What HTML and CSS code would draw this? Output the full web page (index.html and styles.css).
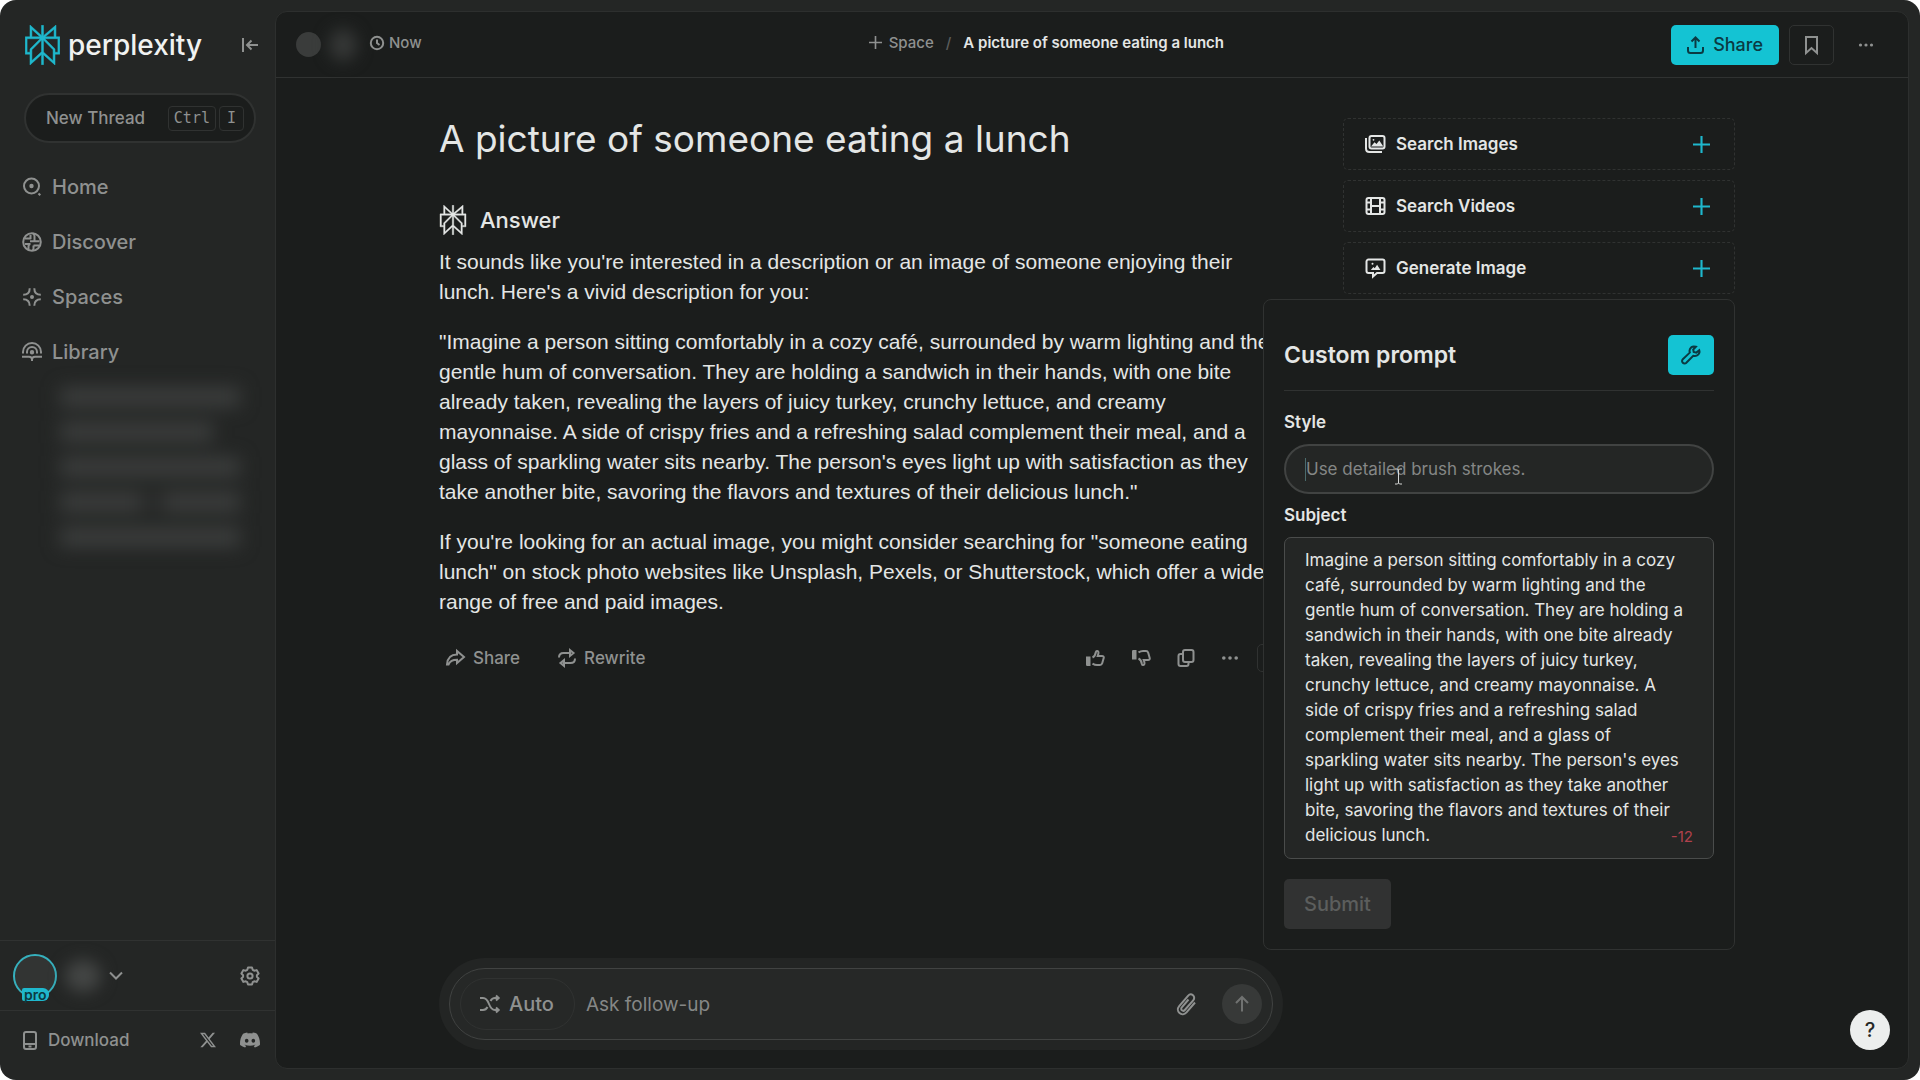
FILE: index.html
```html
<!DOCTYPE html>
<html lang="en">
<head>
  <meta charset="UTF-8" />
  <meta name="viewport" content="width=device-width, initial-scale=1.0"/>
  <title>A picture of someone eating a lunch</title>
  <link rel="stylesheet" href="styles.css">
</head>
<body>
  <!-- shared icons -->
  <svg class="sprite" aria-hidden="true">
    <symbol id="logo" viewBox="1.6 0 20.8 24"><path fill="currentColor" stroke="currentColor" stroke-width=".3" d="M22.3977 7.0896h-2.3106V.0676l-7.5094 6.3542V.1577h-1.1554v6.1966L4.4904 0v7.0896H1.6023v10.3976h2.8882V24l6.932-6.3591v6.2005h1.1554v-6.0469l6.9318 6.1807v-6.4879h2.8882V7.0896zm-3.4657-4.531v4.531h-5.355l5.355-4.531zm-13.2862.0676 4.8691 4.4634H5.6458V2.6262zM2.7576 16.332V8.245h7.8476l-6.1149 6.1147v1.9723H2.7576zm2.8882 5.0404v-3.8852h.0001v-2.6488l5.7763-5.7764v7.0111l-5.7764 5.2993zm12.7086.0248-5.7766-5.1509V9.0618l5.7766 5.7766v6.5588zm2.8882-5.0652h-1.733v-1.9723L13.3948 8.245h7.8478v8.087z"/></symbol>
    <symbol id="plus" viewBox="0 0 16 16"><path d="M8 0v16M0 8h16"/></symbol>
    <symbol id="dots" viewBox="0 0 16 16"><g fill="currentColor" stroke="none"><circle cx="2.5" cy="8" r="1.6"/><circle cx="8" cy="8" r="1.6"/><circle cx="13.5" cy="8" r="1.6"/></g></symbol>
    <symbol id="thumb" viewBox="0 0 20 20"><path fill="currentColor" stroke="none" d="M1 8.500h4.500V18H2.200A1.200 1.200 0 0 1 1 16.800Z"/><path d="M7.500 9.500c2-1 3-3 3.400-5.500.3-1.600 2.600-1.500 2.600.6 0 1.500-.5 2.400-.8 3.300h4.300c1.400 0 2 1 1.700 2.200l-1.500 5.200c-.4 1.300-1 1.700-2.200 1.700h-3c-1.800 0-3-.5-4.500-1.400"/></symbol>
  </svg>

  <div class="app">
    <aside class="sidebar">
      <div class="brand">
        <a href="#" class="brand-link">
          <svg class="brand-mark"><use href="#logo"/></svg>
          <span>perplexity</span>
        </a>
        <button class="icon-btn" aria-label="Collapse sidebar">
          <svg class="icon" width="17" height="16" viewBox="0 0 17 16"><path d="M1 1v14M16 8H5M9.500 3.500 5 8l4.500 4.500"/></svg>
        </button>
      </div>

      <button class="new-thread">
        <span>New Thread</span>
        <kbd>Ctrl</kbd><kbd>I</kbd>
      </button>

      <nav class="nav">
        <a href="#">
          <svg class="icon" width="20" height="20" viewBox="0 0 20 20"><circle cx="9.500" cy="9" r="7.500"/><circle cx="9.500" cy="9" r="1.200" fill="currentColor"/><path d="m16.500 16.500 1.800 1.800"/></svg>
          Home
        </a>
        <a href="#">
          <svg class="icon" width="20" height="20" viewBox="0 0 20 20"><circle cx="10" cy="10" r="8.800"/><path d="M3 6.500h5.500M3 12h5.500M6.500 18v-3.500c0-1.500.8-2.500 2-2.500M8.500 3v2c0 1 .2 1.500 0 1.500M8 9.200h9.500M12.500 6V4c0-1-.5-2-1.500-2.500M12.500 6v3M11.500 13.500h6M11.500 13.500v3c0 .8-.3 1.500-1 2"/></svg>
          Discover
        </a>
        <a href="#">
          <svg class="icon" width="20" height="20" viewBox="0 0 20 20"><path d="M7.700 1.200c0 4-2.500 6.500-6.500 6.500M12.300 1.200c0 4 2.500 6.500 6.500 6.500M7.700 18.800c0-4-2.500-6.500-6.500-6.500M12.300 18.800c0-4 2.500-6.500 6.500-6.500"/><circle cx="10" cy="10" r="1" fill="currentColor"/></svg>
          Spaces
        </a>
        <a href="#">
          <svg class="icon" width="20" height="20" viewBox="0 0 20 20"><path d="M1 11.500V10a9 9 0 0 1 18 0v1.500M5 11.500V10a5 5 0 0 1 10 0v1.500M0 14.800h7c1.600 0 3 .8 3 2.700 0-1.900 1.400-2.700 3-2.700h7M10 17v2"/><circle cx="10" cy="10.300" r="1.200" fill="currentColor"/></svg>
          Library
        </a>
      </nav>

      <div class="history" aria-hidden="true">
        <span class="line"></span>
        <span class="line short"></span>
        <span class="line"></span>
        <span class="line split"></span>
        <span class="line"></span>
      </div>

      <div class="account">
        <button class="profile" aria-label="Account menu">
          <span class="avatar"><span class="pro">pro</span></span>
          <span class="name-blur"></span>
          <svg class="icon" width="14" height="9" viewBox="0 0 14 9"><path d="m1 1.500 6 6 6-6"/></svg>
        </button>
        <button class="icon-btn" aria-label="Settings">
          <svg class="icon" width="20" height="20" viewBox="0 0 20 20"><path stroke-linejoin="round" d="M8 1.500h4l.7 2.300 1.500.9 2.400-.6 2 3.400-1.700 1.700v1.600l1.700 1.700-2 3.400-2.400-.6-1.500.9-.7 2.300H8l-.7-2.300-1.500-.9-2.400.6-2-3.400 1.700-1.700V9.200L1.400 7.500l2-3.400 2.400.6 1.500-.9Z"/><circle cx="10" cy="10" r="2.600"/></svg>
        </button>
      </div>

      <div class="links">
        <a href="#" class="download">
          <svg class="icon" width="14" height="19" viewBox="0 0 14 19"><rect x="1" y="1" width="12" height="17" rx="2"/><path d="M1 13h12M5.500 15.500h3"/></svg>
          Download
        </a>
        <a href="#" aria-label="X"><svg width="16" height="16" viewBox="0 0 24 24"><path fill="currentColor" d="M18.901 1.153h3.680l-8.040 9.190L24 22.846h-7.406l-5.800-7.584-6.638 7.584H.474l8.600-9.830L0 1.154h7.594l5.243 6.932ZM17.610 20.644h2.039L6.486 3.240H4.298Z"/></svg></a>
        <a href="#" aria-label="Discord"><svg width="20" height="20" viewBox="0 0 24 24"><path fill="currentColor" d="M20.317 4.3698a19.7913 19.7913 0 00-4.8851-1.5152.0741.0741 0 00-.0785.0371c-.211.3753-.4447.8648-.6083 1.2495-1.8447-.2762-3.68-.2762-5.4868 0-.1636-.3933-.4058-.8742-.6177-1.2495a.077.077 0 00-.0785-.037 19.7363 19.7363 0 00-4.8852 1.515.0699.0699 0 00-.0321.0277C.5334 9.0458-.319 13.5799.0992 18.0578a.0824.0824 0 00.0312.0561c2.0528 1.5076 4.0413 2.4228 5.9929 3.0294a.0777.0777 0 00.0842-.0276c.4616-.6304.8731-1.2952 1.226-1.9942a.076.076 0 00-.0416-.1057c-.6528-.2476-1.2743-.5495-1.8722-.8923a.077.077 0 01-.0076-.1277c.1258-.0943.2517-.1923.3718-.2914a.0743.0743 0 01.0776-.0105c3.9278 1.7933 8.18 1.7933 12.0614 0a.0739.0739 0 01.0785.0095c.1202.099.246.1981.3728.2924a.077.077 0 01-.0066.1276 12.2986 12.2986 0 01-1.873.8914.0766.0766 0 00-.0407.1067c.3604.698.7719 1.3628 1.225 1.9932a.076.076 0 00.0842.0286c1.961-.6067 3.9495-1.5219 6.0023-3.0294a.077.077 0 00.0313-.0552c.5004-5.177-.8382-9.6739-3.5485-13.6604a.061.061 0 00-.0312-.0286zM8.02 15.3312c-1.1825 0-2.1569-1.0857-2.1569-2.419 0-1.3332.9555-2.4189 2.157-2.4189 1.2108 0 2.1757 1.0952 2.1568 2.419 0 1.3332-.9555 2.4189-2.1569 2.4189zm7.9748 0c-1.1825 0-2.1569-1.0857-2.1569-2.419 0-1.3332.9554-2.4189 2.1569-2.4189 1.2108 0 2.1757 1.0952 2.1568 2.419 0 1.3332-.946 2.4189-2.1568 2.4189Z"/></svg></a>
      </div>
    </aside>

    <main class="panel">
      <header class="topbar">
        <div class="author">
          <span class="author-pic"></span>
          <span class="author-blur"></span>
          <span class="time">
            <svg class="icon" width="14" height="14" viewBox="0 0 14 14"><circle cx="7" cy="7" r="6.200"/><path d="M7 3.500V7l2.500 2"/></svg>
            Now
          </span>
        </div>
        <div class="crumbs">
          <a href="#"><svg class="icon" width="13" height="13"><use href="#plus"/></svg>Space</a>
          <span class="slash">/</span>
          <strong>A picture of someone eating a lunch</strong>
        </div>
        <div class="actions">
          <button class="share-btn">
            <svg class="icon" width="17" height="18" viewBox="0 0 17 18"><path d="M1 11v3.500C1 16 2 17 3.500 17h10c1.500 0 2.500-1 2.500-2.500V11M8.500 12V1.500M4.500 5.500l4-4 4 4"/></svg>
            Share
          </button>
          <button class="square-btn" aria-label="Bookmark">
            <svg class="icon" width="13" height="18" viewBox="0 0 13 18"><path d="M1 1h11v16l-5.500-5L1 17Z"/></svg>
          </button>
          <button class="icon-btn more" aria-label="More"><svg class="icon" width="16" height="16"><use href="#dots"/></svg></button>
        </div>
      </header>

      <div class="content">
        <section class="thread">
          <h1>A picture of someone eating a lunch</h1>
          <h2><svg class="answer-mark"><use href="#logo"/></svg>Answer</h2>
          <div class="answer">
            <p>It sounds like you're interested in a description or an image of someone enjoying their lunch. Here's a vivid description for you:</p>
            <p>"Imagine a person sitting comfortably in a cozy café, surrounded by warm lighting and the gentle hum of conversation. They are holding a sandwich in their hands, with one bite already taken, revealing the layers of juicy turkey, crunchy lettuce, and creamy mayonnaise. A side of crispy fries and a refreshing salad complement their meal, and a glass of sparkling water sits nearby. The person's eyes light up with satisfaction as they take another bite, savoring the flavors and textures of their delicious lunch."</p>
            <p>If you're looking for an actual image, you might consider searching for "someone eating lunch" on stock photo websites like Unsplash, Pexels, or Shutterstock, which offer a wide range of free and paid images.</p>
          </div>

          <div class="toolbar">
            <button>
              <svg class="icon" width="19" height="16" viewBox="0 0 19 16"><path d="M11 1v3.500C5 4.500 1.500 7.500 1 14.500h1.500C4 11 6.500 9.800 11 9.800V13l7-6Z"/></svg>
              Share
            </button>
            <button class="rewrite">
              <svg class="icon" width="18" height="18" viewBox="0 0 18 18"><path d="M1 8.500C1 5.500 3 4 5.500 4H12M12 1.200v5.600L15.500 4ZM17 9.500c0 3-2 4.500-4.500 4.500H6M6 11.200v5.600L2.500 14Z"/></svg>
              Rewrite
            </button>
            <span class="grow"></span>
            <button aria-label="Like"><svg class="icon" width="20" height="20"><use href="#thumb"/></svg></button>
            <button aria-label="Dislike"><svg class="icon flip" width="20" height="20"><use href="#thumb"/></svg></button>
            <button aria-label="Copy"><svg class="icon" width="18" height="18" viewBox="0 0 18 18"><rect x="6" y="1" width="10.500" height="12" rx="2"/><path d="M6 5H3.500A2 2 0 0 0 1.500 7v8a2 2 0 0 0 2 2h6a2 2 0 0 0 2-2v-2"/></svg></button>
            <button aria-label="More"><svg class="icon" width="18" height="18"><use href="#dots"/></svg></button>
            <button class="sources" aria-label="Sources"></button>
          </div>

          <form class="composer">
            <div class="composer-inner">
              <button type="button" class="auto">
                <svg class="icon" width="21" height="18" viewBox="0 0 21 18"><path d="M1 3h3c3 0 4.500 2 6 6s3 6 6 6h3.500M1 15h3c2 0 3.500-1 4.500-3M11.500 6c1-2 2.500-3 4.500-3h3.500M17 .5 19.700 3 17 5.500M17 12.500l2.700 2.500-2.700 2.500"/></svg>
                Auto
              </button>
              <input type="text" aria-label="Ask follow-up" placeholder="Ask follow-up">
              <button type="button" class="attach" aria-label="Attach">
                <svg class="icon" width="24" height="26" viewBox="0 0 24 26"><path d="m21 11.500-8.500 9.800c-2 2.300-5 2.500-7 .8s-2.200-4.700-.3-7L14 4.800c1.400-1.600 3.500-1.800 5-.5s1.600 3.400.2 5l-8.400 9.700c-.8.9-2 1-2.900.3s-.9-2-.1-2.900L14.500 8.500"/></svg>
              </button>
              <button type="button" class="send" aria-label="Send">
                <svg class="icon" width="14" height="16" viewBox="0 0 14 16"><path d="M7 15.500V1M1 7l6-6 6 6"/></svg>
              </button>
            </div>
          </form>
        </section>

        <aside class="media">
          <button class="media-btn">
            <svg class="icon" width="21" height="18" viewBox="0 0 21 18"><rect x="4.500" y="1" width="15" height="12.500" rx="2"/><path d="M1 3v10.500C1 15.500 2.300 17 4.500 17H17"/><path fill="currentColor" stroke="none" d="m6 11.500 3.500-4.300 2 1.800 2.800-3.500 4 6Z"/><circle cx="8.500" cy="4.800" r=".9" fill="currentColor" stroke="none"/></svg>
            <span>Search Images</span>
            <svg class="icon plus" width="17" height="17"><use href="#plus"/></svg>
          </button>
          <button class="media-btn">
            <svg class="icon" width="21" height="18" viewBox="0 0 21 18"><rect x="1.500" y="1" width="18" height="16" rx="2"/><path d="M6 1v16M15 1v16M6 9h9M1.500 5.500H6M1.500 12.500H6M15 5.500h4.500M15 12.500h4.500"/></svg>
            <span>Search Videos</span>
            <svg class="icon plus" width="17" height="17"><use href="#plus"/></svg>
          </button>
          <button class="media-btn">
            <svg class="icon" width="21" height="20" viewBox="0 0 21 20"><path d="M3.500 1.500h14a2 2 0 0 1 2 2V13a2 2 0 0 1-2 2H12l-4 3.500V15H3.500a2 2 0 0 1-2-2V3.500a2 2 0 0 1 2-2Z"/><path fill="currentColor" stroke="none" d="m5.800 12 2.600-3 1.400 1.200 2.300-3.400 3.300 5.200Z"/><circle cx="7.500" cy="5.800" r="1" fill="currentColor" stroke="none"/></svg>
            <span>Generate Image</span>
            <svg class="icon plus" width="17" height="17"><use href="#plus"/></svg>
          </button>

          <form class="prompt">
            <div class="prompt-head">
              <h3>Custom prompt</h3>
              <button type="button" aria-label="Prompt settings">
                <svg class="icon" width="20" height="20" viewBox="0 0 20 20"><path d="M18.200 5.200 15.300 7.600 12.700 7 12.200 4.500 14.900 1.800C12.400 1 9.900 2 8.900 4.200c-.5 1.200-.5 2.300-.1 3.400L1.800 14.300c-1 1-1 2.500 0 3.500s2.600 1 3.500 0l6.900-7c1.600.5 3.700.2 5-1.200 1.200-1.200 1.600-2.900 1-4.400Z"/></svg>
              </button>
            </div>
            <label for="style">Style</label>
            <div class="style-field">
              <input type="text" id="style" placeholder="Use detailed brush strokes.">
              <svg class="pointer" width="9" height="17" viewBox="0 0 9 17"><path d="M1 1h2.500l1 1 1-1H8M4.500 2v13M1 16h2.500l1-1 1 1H8"/></svg>
            </div>
            <label for="subject">Subject</label>
            <div class="subject-field">
              <textarea id="subject" rows="12">Imagine a person sitting comfortably in a cozy café, surrounded by warm lighting and the gentle hum of conversation. They are holding a sandwich in their hands, with one bite already taken, revealing the layers of juicy turkey, crunchy lettuce, and creamy mayonnaise. A side of crispy fries and a refreshing salad complement their meal, and a glass of sparkling water sits nearby. The person's eyes light up with satisfaction as they take another bite, savoring the flavors and textures of their delicious lunch.</textarea>
              <span class="count">-12</span>
            </div>
            <button class="submit" disabled>Submit</button>
          </form>
        </aside>
      </div>

      <button class="help" aria-label="Help">?</button>
    </main>
  </div>
</body>
</html>
```
FILE: styles.css
```css
:root {
  --side: #242625;
  --bg: #1b1d1c;
  --line: #303231;
  --muted: #8f9190;
  --text: #e4e6e5;
  --cyan: #1fb8cd;
  --cyan-bright: #14c3d3;
}

* {
  box-sizing: border-box;
  margin: 0;
  padding: 0;
}

body {
  font-family: Inter, "Liberation Sans", sans-serif;
  background: #fff;
  color: var(--text);
}

button,
input,
textarea {
  font: inherit;
  color: inherit;
  background: none;
  border: none;
  outline: none;
}

button {
  cursor: pointer;
}

a {
  color: inherit;
  text-decoration: none;
}

.sprite {
  position: absolute;
  width: 0;
  height: 0;
}

.icon {
  flex: none;
  overflow: visible;
  fill: none;
  stroke: currentColor;
  stroke-width: 2;
}

.app {
  display: flex;
  min-height: 100vh;
  padding: 11px 11px 11px 0;
  background: var(--side);
  border-radius: 16px;
}

/* sidebar */
.sidebar {
  display: flex;
  flex-direction: column;
  flex: none;
  width: 275px;
  color: var(--muted);
}

.brand {
  display: flex;
  align-items: center;
  justify-content: space-between;
  padding: 14px 16px 0 25px;
}

.brand-link {
  display: flex;
  align-items: center;
  gap: 8px;
  font-size: 28px;
  line-height: 38px;
  font-weight: 500;
  color: #f0f2f1;
}

.brand-mark {
  width: 35px;
  height: 40px;
  color: var(--cyan);
}

.icon-btn {
  display: flex;
  color: var(--muted);
}

.new-thread {
  display: flex;
  align-items: center;
  gap: 3px;
  height: 50px;
  margin: 28px 19px 0 24px;
  padding: 0 10px 0 20px;
  background: var(--bg);
  border: 2px solid var(--line);
  border-radius: 25px;
  font-size: 17px;
  font-weight: 500;
}

.new-thread span {
  flex: 1;
  text-align: left;
}

.new-thread kbd {
  padding: 0 5px;
  border: 1px solid var(--line);
  border-radius: 4px;
  font: 15px/23px "DejaVu Sans Mono", monospace;
}

.new-thread kbd:last-child {
  padding: 0 7px;
}

.nav {
  display: flex;
  flex-direction: column;
  gap: 25px;
  padding: 29px 22px 0;
}

.nav a {
  display: flex;
  align-items: center;
  gap: 10px;
  font-size: 20px;
  line-height: 30px;
  font-weight: 500;
}

.history {
  display: flex;
  flex-direction: column;
  gap: 15px;
  padding: 20px 35px 20px 60px;
  filter: blur(9px);
}

.history .line {
  height: 20px;
  background: #3b3d3c;
}

.history .short {
  width: 85%;
}

.history .split {
  background: linear-gradient(90deg, #3b3d3c 45%, #2a2c2b 45%, #2a2c2b 58%, #3b3d3c 58%);
}

.account {
  display: flex;
  align-items: center;
  justify-content: space-between;
  height: 70px;
  margin-top: auto;
  padding: 0 15px 0 13px;
  border-top: 1px solid var(--line);
}

.profile {
  display: flex;
  align-items: center;
  color: var(--muted);
}

.avatar {
  position: relative;
  width: 44px;
  height: 44px;
  background: #323433;
  border: 2px solid #36b0bd;
  border-radius: 50%;
}

.pro {
  position: absolute;
  left: 7px;
  bottom: -5px;
  padding: 0 2px;
  background: var(--cyan);
  border-radius: 2px 6px 6px 2px;
  color: #0c3b42;
  font-size: 14px;
  line-height: 13px;
  font-weight: 600;
}

.name-blur,
.author-blur {
  width: 36px;
  height: 32px;
  margin: 0 8px;
  background: #444645;
  border-radius: 50%;
  filter: blur(8px);
}

.links {
  display: flex;
  align-items: center;
  gap: 24px;
  height: 59px;
  padding: 0 15px 0 23px;
  border-top: 1px solid var(--line);
}

.links a {
  display: flex;
}

.links .download {
  flex: 1;
  align-items: center;
  gap: 11px;
  font-size: 17px;
  font-weight: 500;
}

/* main panel */
.panel {
  display: flex;
  flex: 1;
  flex-direction: column;
  position: relative;
  min-width: 0;
  background: var(--bg);
  border: 1px solid #2d2f2e;
  border-radius: 12px;
}

.topbar {
  display: flex;
  align-items: center;
  justify-content: space-between;
  height: 66px;
  padding: 0 20px;
  border-bottom: 1px solid var(--line);
  color: var(--muted);
  font-size: 15px;
  font-weight: 500;
}

.author,
.time,
.crumbs,
.crumbs a,
.actions {
  display: flex;
  align-items: center;
}

.time,
.crumbs {
  padding-bottom: 4px;
}

.time {
  gap: 5px;
  margin-left: 5px;
}

.author-pic {
  width: 25px;
  height: 25px;
  background: #3a3c3b;
  border-radius: 50%;
}

.author-blur {
  width: 28px;
  background: #363837;
}

.crumbs {
  gap: 12px;
}

.crumbs a {
  gap: 7px;
}

.slash {
  color: #5c5e5d;
}

.crumbs strong {
  color: var(--text);
  font-weight: 600;
}

.actions {
  gap: 10px;
}

.share-btn {
  display: flex;
  align-items: center;
  gap: 9px;
  height: 40px;
  padding: 0 16px;
  background: var(--cyan-bright);
  border-radius: 5px;
  color: #0b3a42;
  font-size: 18px;
  font-weight: 500;
}

.square-btn {
  display: flex;
  align-items: center;
  justify-content: center;
  width: 45px;
  height: 40px;
  border: 1px solid var(--line);
  border-radius: 5px;
  color: var(--muted);
}

.more {
  padding: 12px 14px;
}

.content {
  display: grid;
  grid-template-columns: minmax(0, 844px) 392px;
  gap: 60px;
  flex: 1;
  justify-content: center;
  padding: 40px 10px 18px 0;
}

.thread {
  display: flex;
  flex-direction: column;
}

h1 {
  font-size: 37px;
  line-height: 42px;
  font-weight: 400;
}

h2 {
  display: flex;
  align-items: center;
  gap: 13px;
  margin-top: 45px;
  font-size: 22px;
  line-height: 30px;
  font-weight: 500;
}

.answer-mark {
  width: 28px;
  height: 30px;
}

.answer {
  margin-top: 12px;
  font-family: "Liberation Sans", Inter, sans-serif;
  font-size: 21px;
  line-height: 30px;
}

.answer p + p {
  margin-top: 20px;
}

.toolbar {
  display: flex;
  align-items: center;
  gap: 26px;
  height: 30px;
  margin-top: 26px;
  padding-left: 7px;
  color: var(--muted);
  font-size: 17px;
  font-weight: 500;
}

.toolbar button {
  display: flex;
  align-items: center;
  gap: 8px;
}

.toolbar .rewrite {
  margin-left: 12px;
}

.grow {
  flex: 1;
}

.flip {
  transform: scaleY(-1);
}

.toolbar .sources {
  width: 26px;
  height: 28px;
  margin-left: -8px;
  border: 1px solid var(--line);
  border-radius: 5px;
}

.composer {
  margin-top: auto;
  padding: 10px;
  background: #232524;
  border-radius: 46px;
}

.composer-inner {
  display: flex;
  align-items: center;
  height: 72px;
  padding: 0 10px;
  background: #262827;
  border: 1px solid #414342;
  border-radius: 36px;
  color: var(--muted);
  font-size: 19px;
}

.auto {
  display: flex;
  align-items: center;
  gap: 9px;
  height: 52px;
  padding: 0 20px 0 18px;
  border: 1px solid var(--line);
  border-radius: 26px;
  font-size: 20px;
  font-weight: 500;
}

.composer input {
  flex: 1;
  min-width: 0;
  padding: 0 11px;
}

input::placeholder {
  color: #858786;
  opacity: 1;
}

.attach {
  display: flex;
  margin-right: 24px;
}

.send {
  display: flex;
  align-items: center;
  justify-content: center;
  width: 40px;
  height: 40px;
  background: #373938;
  border-radius: 50%;
  color: #707271;
}

.media {
  display: flex;
  flex-direction: column;
  gap: 10px;
  position: relative;
  align-self: start;
}

.media-btn {
  display: flex;
  align-items: center;
  gap: 10px;
  height: 52px;
  padding: 0 24px 0 21px;
  border: 1px dashed var(--line);
  border-radius: 5px;
  font-size: 17px;
  font-weight: 600;
}

.media-btn span {
  flex: 1;
  text-align: left;
}

.plus {
  color: var(--cyan);
}

/* custom prompt popover */
.prompt {
  position: absolute;
  top: calc(100% + 5px);
  right: 0;
  width: 472px;
  padding: 35px 20px 20px;
  background: var(--bg);
  border: 1px solid var(--line);
  border-radius: 8px;
}

.prompt-head {
  display: flex;
  align-items: center;
  justify-content: space-between;
  padding-bottom: 15px;
  margin-bottom: 20px;
  border-bottom: 1px solid var(--line);
}

.prompt-head h3 {
  font-size: 23px;
  font-weight: 600;
}

.prompt-head button {
  padding: 10px 13px;
  height: 40px;
  background: var(--cyan-bright);
  border-radius: 5px;
  color: #0b3a42;
}

.prompt label {
  display: block;
  font-size: 17px;
  line-height: 23px;
  font-weight: 600;
}

.style-field {
  position: relative;
  margin: 10px 0;
}

.style-field input {
  width: 100%;
  height: 50px;
  padding: 0 20px;
  background: #242625;
  border: 2px solid #414342;
  border-radius: 25px;
  font-size: 17px;
}

/* text caret */
.style-field::before {
  content: "";
  position: absolute;
  top: 14px;
  left: 21px;
  width: 1px;
  height: 23px;
  background: #4b6b6c;
}

.pointer {
  position: absolute;
  top: 24px;
  left: 110px;
  fill: none;
  stroke: #d5d7d6;
}

.subject-field {
  position: relative;
  margin-top: 10px;
}

.subject-field textarea {
  display: block;
  width: 100%;
  padding: 10px 27px 10px 20px;
  background: #242625;
  border: 1px solid #4a4c4b;
  border-radius: 7px;
  font-size: 17px;
  line-height: 25px;
  resize: none;
  overflow: hidden;
}

.count {
  position: absolute;
  right: 21px;
  bottom: 12px;
  color: #b0414c;
  font-size: 15px;
  line-height: 20px;
}

.submit {
  height: 50px;
  margin-top: 20px;
  padding: 0 20px;
  background: #313232;
  border-radius: 5px;
  color: #5c5e5d;
  font-size: 20px;
  font-weight: 500;
}

.help {
  position: absolute;
  right: 18px;
  bottom: 18px;
  width: 40px;
  height: 40px;
  background: #eceeed;
  border-radius: 50%;
  color: #262827;
  font-size: 20px;
  font-weight: 500;
}
```
